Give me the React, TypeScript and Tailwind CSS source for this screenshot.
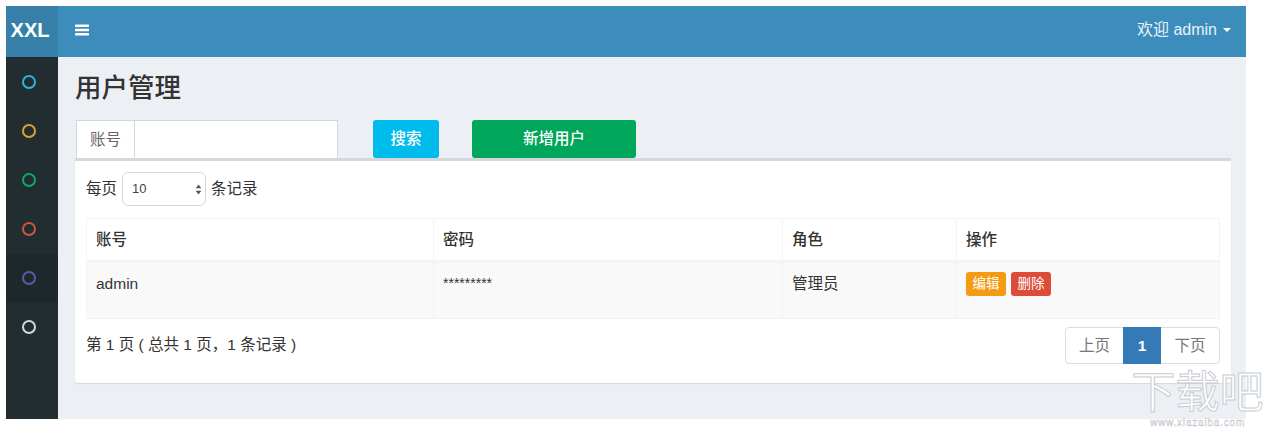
import React from "react";

const dots = [
  { c: "border-[#29b6d8]", bg: "" },
  { c: "border-[#e0a030]", bg: "" },
  { c: "border-[#14a562]", bg: "" },
  { c: "border-[#d0533f]", bg: "" },
  { c: "border-[#5c5aa8]", bg: "bg-[#1e282c]" },
  { c: "border-[#d2d6de]", bg: "" },
];

export default function App() {
  return (
    <div className="relative h-[428px] w-[1265px] overflow-hidden bg-white pl-[6px] pt-[6px] font-['Liberation_Sans','Noto_Sans_CJK_SC',sans-serif] text-[15.5px] text-[#333]">
      <div className="flex h-[413px] w-[1240px]">
        <aside className="flex w-[52px] flex-col bg-[#222d32]">
          <div className="flex h-[51px] items-center justify-center bg-[#367fa9] pb-[4px] pr-[4px] text-[20px] font-bold text-white">XXL</div>
          <div className="flex flex-col pt-px">
            {dots.map((d, i) => (
              <div key={i} className={`flex h-[49px] items-center justify-center pb-[2px] pr-[6px] ${d.bg}`}>
                <span className={`h-[14px] w-[14px] rounded-full border-2 ${d.c}`} />
              </div>
            ))}
          </div>
        </aside>
        <div className="flex min-w-0 flex-1 flex-col bg-[#ecf0f5]">
          <header className="flex h-[51px] items-center justify-between bg-[#3c8dbc] pb-[4px] pl-[17px] pr-[15px] text-white">
            <svg width="14" height="12" viewBox="0 0 14 12" fill="currentColor" aria-hidden="true">
              <rect x="0" y="0.5" width="14" height="2.4" rx="0.6" />
              <rect x="0" y="4.8" width="14" height="2.4" rx="0.6" />
              <rect x="0" y="9.1" width="14" height="2.4" rx="0.6" />
            </svg>
            <div className="flex items-center gap-[6px] text-[16px] text-[#e6f1f7]">
              <span>欢迎 admin</span>
              <span className="mt-[1px] h-0 w-0 border-x-[4px] border-t-[4px] border-x-transparent border-t-white" />
            </div>
          </header>
          <main className="flex flex-col pl-[17px] pr-[15px]">
            <h1 className="mt-[13px] h-[36px] text-[26.5px] font-medium leading-[36px] text-[#333]">用户管理</h1>
            <div className="mt-[14px] flex h-[38px] items-start pl-[1px]">
              <div className="flex h-[38px] w-[262px] border border-b-0 border-[#d2d6de] bg-white">
                <span className="flex w-[58px] items-center justify-center border-r border-[#d2d6de] text-[#666]">账号</span>
              </div>
              <button className="ml-[35px] h-[38px] w-[66px] rounded-[3px] bg-[#00bcec] font-medium text-white">搜索</button>
              <button className="ml-[33px] h-[38px] w-[164px] rounded-[3px] bg-[#00a65a] font-medium text-white">新增用户</button>
            </div>
            <section className="h-[225px] rounded-b-[3px] border-t-[3px] border-[#d4d8dc] bg-white px-[11px] shadow-[0_1px_1px_rgba(0,0,0,0.1)]">
              <div className="mt-[11px] flex h-[34px] items-center">
                <span>每页</span>
                <div className="relative mx-[5px] flex h-[34px] w-[84px] items-center rounded-[6px] border border-[#d2d6de] pl-[9px] text-[13px] text-[#444]">
                  10
                  <svg className="absolute right-[3px] top-[11px]" width="7" height="11" viewBox="0 0 7 11" fill="#555" aria-hidden="true">
                    <path d="M3.5 0.5 L6.3 4.3 H0.7 Z" />
                    <path d="M3.5 10.5 L6.3 6.7 H0.7 Z" />
                  </svg>
                </div>
                <span>条记录</span>
              </div>
              <table className="mt-[12px] w-[1133px] table-fixed border-collapse">
                <colgroup>
                  <col className="w-[347px]" />
                  <col className="w-[349px]" />
                  <col className="w-[174px]" />
                  <col className="w-[263px]" />
                </colgroup>
                <thead>
                  <tr className="h-[43px] border-b-[3px] border-[#f4f4f4] text-left">
                    {["账号", "密码", "角色", "操作"].map((h) => (
                      <th key={h} className="border border-b-0 border-[#f4f4f4] px-[9px] font-medium">{h}</th>
                    ))}
                  </tr>
                </thead>
                <tbody>
                  <tr className="h-[57px] bg-[#f9f9f9] align-top">
                    <td className="border border-[#f4f4f4] px-[9px] pt-[9px]">admin</td>
                    <td className="border border-[#f4f4f4] px-[9px] pt-[10px] text-[14px]">*********</td>
                    <td className="border border-[#f4f4f4] px-[9px] pt-[9px]">管理员</td>
                    <td className="border border-[#f4f4f4] px-[9px] pt-[9px]">
                      <div className="flex gap-[5px]">
                        <button className="h-[24px] w-[40px] rounded-[3px] bg-[#f39c12] text-[13.5px] text-white">编辑</button>
                        <button className="h-[24px] w-[40px] rounded-[3px] bg-[#dd4b39] text-[13.5px] text-white">删除</button>
                      </div>
                    </td>
                  </tr>
                </tbody>
              </table>
              <div className="mt-[8px] flex items-start justify-between">
                <span className="mt-[6px]">第 1 页 ( 总共 1 页，1 条记录 )</span>
                <div className="flex h-[37px] rounded-[4px] border border-[#ddd] text-[#777]">
                  <span className="flex w-[57px] items-center justify-center">上页</span>
                  <span className="-my-px flex w-[38px] items-center justify-center bg-[#337ab7] font-bold text-white">1</span>
                  <span className="flex w-[58px] items-center justify-center">下页</span>
                </div>
              </div>
            </section>
          </main>
        </div>
      </div>
      <div className="absolute left-[1130px] top-[368px] flex w-[135px] flex-col items-center whitespace-nowrap">
        <span className="text-[44px] leading-[50px] text-white [-webkit-text-stroke:1px_#c8ccd0]">下载吧</span>
        <span className="text-[10px] leading-[9px] tracking-[0.8px] text-white [-webkit-text-stroke:0.4px_#b8bcc0]">www.xiazaiba.com</span>
      </div>
    </div>
  );
}
